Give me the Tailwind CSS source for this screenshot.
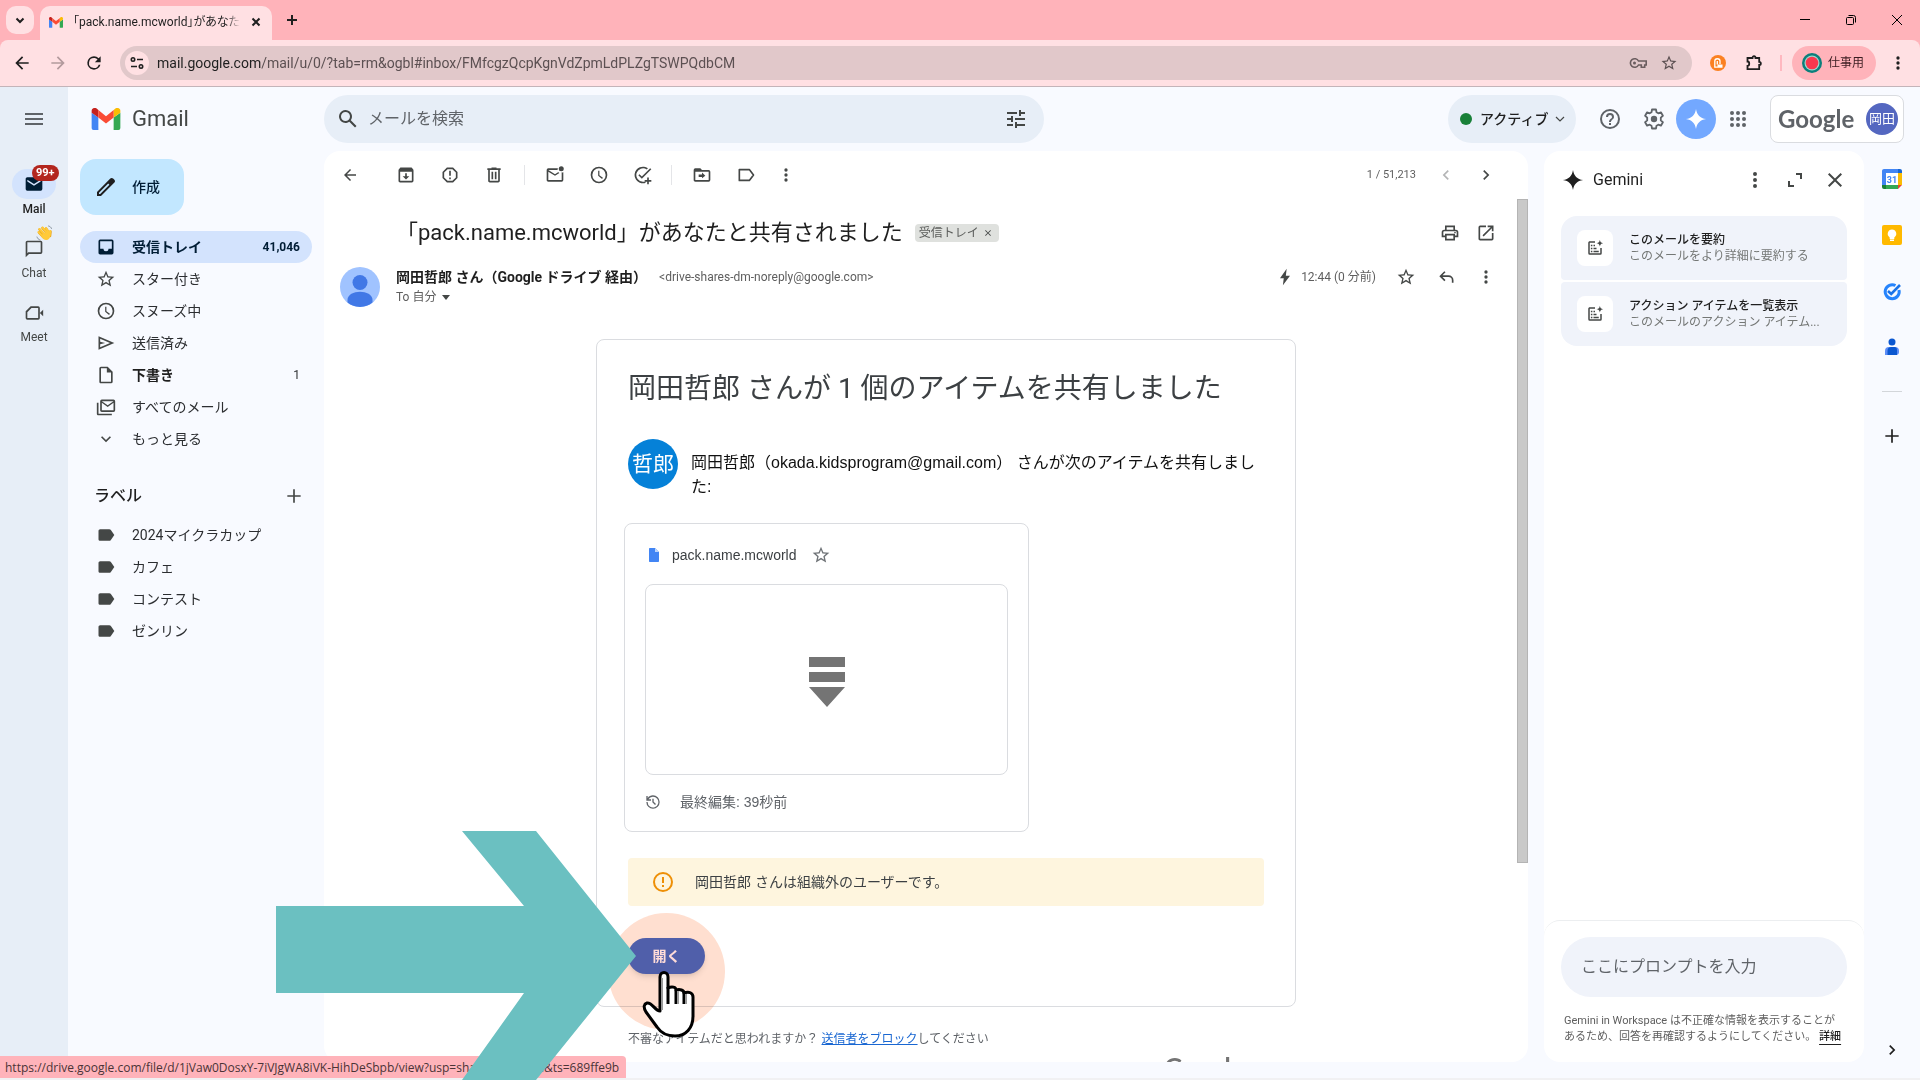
<!DOCTYPE html>
<html lang="ja">
<head>
  <meta charset="UTF-8">
  <meta name="viewport" content="width=device-width, initial-scale=1.0">
  <title>「pack.name.mcworld」があなたと共有されました</title>
  <script src="https://cdn.jsdelivr.net/npm/@tailwindcss/browser@4"></script>
</head>
<body class="relative h-screen overflow-hidden flex flex-col bg-[#f8faff] text-[#1f1f1f] font-['Roboto','Noto_Sans_CJK_JP',sans-serif]">

  <!-- shared icons -->
  <svg class="hidden">
    <symbol id="gmail" viewBox="0 0 30 23">
      <path fill="#4285f4" d="M0 5v16a2 2 0 0 0 2 2h5V10z"/>
      <path fill="#34a853" d="M23 10v13h5a2 2 0 0 0 2-2V5z"/>
      <path fill="#fbbc04" d="M23 2.200V10l7-5V3c0-2.800-3.200-4-5.200-2.500z"/>
      <path fill="#c5221f" d="M0 3v2l7 5V2.200L5.200.5C3.200-1 0 .2 0 3z"/>
      <path fill="#fa4b35" d="M7 2.200l8 6.300 8-6.300V10l-8 6.200L7 10z"/>
    </symbol>
    <symbol id="back" viewBox="0 0 24 24"><path d="M20 11H7.830l5.590-5.590L12 4l-8 8 8 8 1.410-1.410L7.830 13H20v-2z"/></symbol>
    <symbol id="more" viewBox="0 0 24 24"><path d="M12 8a2 2 0 1 0 0-4 2 2 0 0 0 0 4zm0 2a2 2 0 1 0 0 4 2 2 0 0 0 0-4zm0 6a2 2 0 1 0 0 4 2 2 0 0 0 0-4z"/></symbol>
    <symbol id="star" viewBox="0 0 24 24"><path d="M22 9.240l-7.190-.62L12 2 9.190 8.630 2 9.240l5.460 4.730L5.820 21 12 17.270 18.180 21l-1.630-7.030L22 9.240zM12 15.400l-3.760 2.270 1-4.280-3.320-2.880 4.380-.38L12 6.100l1.710 4.040 4.380.38-3.320 2.880 1 4.280L12 15.400z"/></symbol>
    <symbol id="clock" viewBox="0 0 24 24"><path d="M12 2a10 10 0 1 0 0 20 10 10 0 0 0 0-20zm0 18a8 8 0 1 1 0-16 8 8 0 0 1 0 16zm.5-13H11v6l4.700 3.700 1-1.300-4.200-3.100z"/></symbol>
    <symbol id="alert" viewBox="0 0 24 24"><path d="M11 15h2v2h-2zm0-8h2v6h-2zm1-5a10 10 0 1 0 0 20 10 10 0 0 0 0-20zm0 18a8 8 0 1 1 0-16 8 8 0 0 1 0 16z"/></symbol>
    <symbol id="label" viewBox="0 0 24 24"><path d="M17.600 5.800C17.200 5.300 16.700 5 16 5H5a2 2 0 0 0-2 2v10c0 1.100.9 2 2 2h11c.7 0 1.200-.3 1.600-.8L22 12z"/></symbol>
    <symbol id="down" viewBox="0 0 24 24"><path d="M7.400 8.600L12 13.200l4.600-4.600L18 10l-6 6-6-6z"/></symbol>
    <symbol id="right" viewBox="0 0 24 24"><path d="M8.600 16.600L13.200 12 8.600 7.400 10 6l6 6-6 6z"/></symbol>
    <symbol id="plus" viewBox="0 0 24 24"><path d="M20 13h-7v7h-2v-7H4v-2h7V4h2v7h7z"/></symbol>
    <symbol id="close" viewBox="0 0 24 24"><path d="M19 6.400L17.600 5 12 10.600 6.400 5 5 6.400 10.600 12 5 17.600 6.400 19 12 13.400 17.600 19 19 17.600 13.400 12z"/></symbol>
    <symbol id="spark" viewBox="0 0 24 24"><path d="M12 1c1 6.500 4.500 10 11 11-6.500 1-10 4.500-11 11C11 16.500 7.500 13 1 12 7.500 11 11 7.500 12 1z"/></symbol>
    <symbol id="note" viewBox="0 0 24 24"><path d="M12 3v2H5v14h14v-7h2v7a2 2 0 0 1-2 2H5a2 2 0 0 1-2-2V5c0-1.100.9-2 2-2zM6.500 7.500h2v2h-2zm0 4h2v2h-2zm0 4h2v2h-2zm3.500-4h4v2h-4zm0 4h7v2h-7zm0-8h2v2h-2zM18.500 1c.5 3 1.500 4 4.500 4.500-3 .5-4 1.500-4.500 4.500-.5-3-1.500-4-4.500-4.500 3-.5 4-1.500 4.500-4.500z"/></symbol>
  </svg>

  <!-- tab strip -->
  <div class="h-10 shrink-0 flex items-end bg-[#ffb3ba] text-[#1f1f1f]">
    <button class="ml-[6px] mb-[6px] size-7 rounded-[10px] bg-[#ffe0e3] flex items-center justify-center" aria-label="タブを検索"><svg class="size-4" viewBox="0 0 16 16" fill="none" stroke="#1f1f1f" stroke-width="2"><path d="M4.500 6.500L8 10l3.500-3.500"/></svg></button>
    <div class="ml-[6px] w-[232px] h-[34px] rounded-t-[10px] bg-[#ffe0e3] flex items-center pl-[9px] pr-2 pb-[2px]">
      <svg class="w-[14px] h-[11px] shrink-0"><use href="#gmail"/></svg>
      <div class="ml-[10px] w-[167px] h-5 overflow-hidden whitespace-nowrap text-[12px] leading-5 [font-feature-settings:'palt'] [mask-image:linear-gradient(to_right,black_92%,transparent)]">「pack.name.mcworld」があなたと共有されました</div>
      <button class="ml-2 size-4" aria-label="タブを閉じる"><svg class="size-4" viewBox="0 0 16 16" fill="none" stroke="#1f1f1f" stroke-width="2"><path d="M4.500 4.500l7 7M11.500 4.500l-7 7"/></svg></button>
    </div>
    <button class="ml-3 mb-3 size-4" aria-label="新しいタブ"><svg class="size-4" viewBox="0 0 16 16" fill="none" stroke="#1f1f1f" stroke-width="2"><path d="M8 3v10M3 8h10"/></svg></button>
    <div class="ml-auto h-10 flex items-center gap-[30px] pr-[15px]">
      <button class="size-4" aria-label="最小化"><svg class="size-4" viewBox="0 0 16 16" fill="none" stroke="#000"><path d="M3 7.500h10"/></svg></button>
      <button class="size-4" aria-label="元に戻す"><svg class="size-4" viewBox="0 0 16 16" fill="none" stroke="#000"><rect x="3.500" y="5.500" width="7" height="7" rx="1"/><path d="M5.500 3.500h5a2 2 0 0 1 2 2v5"/></svg></button>
      <button class="size-4" aria-label="閉じる"><svg class="size-4" viewBox="0 0 16 16" fill="none" stroke="#000"><path d="M3 3l10 10M13 3L3 13"/></svg></button>
    </div>
  </div>

  <!-- address bar -->
  <div class="h-[47px] shrink-0 bg-[#ffb3ba]">
    <div class="h-[47px] rounded-t-[8px] bg-[#ffe0e3] border-b border-[#c3b4b9] flex items-center">
      <button class="ml-3 size-5" aria-label="戻る"><svg class="size-5 fill-[#1f1f1f]"><use href="#back"/></svg></button>
      <button class="ml-4 size-5" aria-label="進む"><svg class="size-5 fill-[#b39a9d] rotate-180"><use href="#back"/></svg></button>
      <button class="ml-4 size-5" aria-label="再読み込み"><svg class="size-5 fill-[#1f1f1f]" viewBox="0 0 24 24"><path d="M17.650 6.350A7.960 7.960 0 0 0 12 4a8 8 0 1 0 7.730 10h-2.080A6 6 0 1 1 12 6c1.660 0 3.140.69 4.220 1.780L13 11h7V4z"/></svg></button>
      <div class="ml-4 h-[34px] flex-1 rounded-full bg-[#e1c8ca] flex items-center pl-[5px] pr-[14px]">
        <button class="size-6 rounded-full bg-[#ffe0e3] flex items-center justify-center" aria-label="サイト情報"><svg class="size-4" viewBox="0 0 16 16" fill="none" stroke="#1f1f1f" stroke-width="1.600"><circle cx="4" cy="4.500" r="1.700"/><path d="M8 4.500h6M2 11.500h6"/><circle cx="12" cy="11.500" r="1.700"/></svg></button>
        <div class="ml-2 text-[14px] leading-5 whitespace-nowrap text-[#5c5052]"><span class="text-[#1f1f1f]">mail.google.com</span>/mail/u/0/?tab=rm&amp;ogbl#inbox/FMfcgzQcpKgnVdZpmLdPLZgTSWPQdbCM</div>
        <svg class="ml-auto w-[18px] h-3" viewBox="0 0 18 12" fill="none" stroke="#6a5d5f" stroke-width="1.600"><path d="M9.500 4h7.700v4h-1.500v2.200h-3.400V8H9.500a4.300 4.300 0 1 1 0-4z"/><circle cx="5.500" cy="6" r="1.500" fill="#6a5d5f" stroke="none"/></svg>
        <svg class="ml-[13px] size-[18px] fill-[#5c5052]"><use href="#star"/></svg>
      </div>
      <svg class="ml-[18px] size-4" viewBox="0 0 16 16"><circle cx="8" cy="8" r="8" fill="#fb8122"/><path fill="none" stroke="#fff" stroke-width="1.300" d="M4.800 12.500V6C4.800 3 10 3 10 6v3M7.300 6v3.500"/><path fill="#fff" d="M4.500 11.500h3V9.500h5v3.200h-8z"/></svg>
      <svg class="ml-5 size-4" viewBox="0 0 16 16" fill="none" stroke="#1f1f1f" stroke-width="1.800"><path d="M1.500 3h5c0-2.500 3-2.500 3 0h3.700v3.800c2.200 0 2.200 3.200 0 3.200v4.200H1.500v-3.400c2.300 0 2.300-4.300 0-4.300z"/></svg>
      <span class="ml-[18px] mr-[10px] w-[2px] h-4 bg-[#ffb8c0]"></span>
      <button class="h-[34px] w-[84px] rounded-full bg-[#ffb3ba] flex items-center pl-[10px] gap-[6px] text-[12px] text-[#3a1c20]">
        <svg class="size-5" viewBox="0 0 20 20"><circle cx="10" cy="10" r="10" fill="#0b7f7b"/><circle cx="10" cy="10" r="7.500" fill="#9ed8cf"/><circle cx="10" cy="10" r="6.300" fill="#f8384f"/></svg>仕事用
      </button>
      <button class="ml-3 mr-3 size-5" aria-label="メニュー"><svg class="size-5 fill-[#1f1f1f]"><use href="#more"/></svg></button>
    </div>
  </div>

  <div class="flex-1 min-h-0 flex border-b-2 border-[#f1f1f3]">
    <!-- app rail -->
    <nav class="w-[68px] shrink-0 bg-[#e7eef7] flex flex-col items-center text-[12px] leading-4 text-[#444746]">
      <button class="mt-5 size-6" aria-label="メインメニュー"><svg class="size-6 fill-[#5f6368]" viewBox="0 0 24 24"><path d="M3 6h18v2H3zm0 5h18v2H3zm0 5h18v2H3z"/></svg></button>
      <a href="#" class="mt-[38px] flex flex-col items-center text-[#1f1f1f] font-medium">
        <span class="relative w-11 h-[30px] rounded-full bg-[#d3e3fd] flex items-center justify-center">
          <svg class="size-5 fill-[#001d35]" viewBox="0 0 24 24"><path d="M4 4h16a2 2 0 0 1 2 2v12a2 2 0 0 1-2 2H4a2 2 0 0 1-2-2V6c0-1.100.9-2 2-2zm0 3v2l8 5 8-5V7l-8 5z"/></svg>
          <span class="absolute -top-1 left-5 h-4 px-1 rounded-full bg-[#b3261e] text-white text-[11px] leading-4 font-bold">99+</span>
        </span>
        <span class="mt-[2px]">Mail</span>
      </a>
      <a href="#" class="mt-4 flex flex-col items-center">
        <span class="relative w-11 h-8 flex items-center justify-center">
          <svg class="size-5 fill-[#444746]" viewBox="0 0 24 24"><path d="M4 2h16a2 2 0 0 1 2 2v12a2 2 0 0 1-2 2H6l-4 4V4c0-1.100.9-2 2-2zm0 2v13l1-1h15V4z"/></svg>
          <svg class="absolute -top-2 left-[24px] size-4" viewBox="0 0 32 32" fill="none" stroke-linecap="round">
            <path stroke="#e5a11a" stroke-width="5" d="M6 15l10 10M7 9l10 11M13 6l9 11M20 7l6 9M29 13l-1 9"/>
            <path stroke="#ffca3a" stroke-width="4" d="M5 14l10 10M7 8l10 11M13 5l9 11M20 6l6 9M28.500 12l-1.500 9"/>
            <path fill="#ffca3a" d="M11 20l13-8 5 6c0 8-4 12-9 12-4 0-7-3-9-6z"/>
            <path stroke="#6d7b86" stroke-width="1.500" d="M2 24c1 3 3 5 6 6M25 2c3 1 5 2 6 5"/>
          </svg>
        </span>
        <span>Chat</span>
      </a>
      <a href="#" class="mt-4 flex flex-col items-center">
        <span class="w-11 h-8 flex items-center justify-center"><svg class="size-5 fill-[#444746]" viewBox="0 0 24 24"><path d="M8 4h9a2 2 0 0 1 2 2v12a2 2 0 0 1-2 2H4a2 2 0 0 1-2-2V10zm1 2L4 11v7h13V6zm10 6l4-4v8z"/></svg></span>
        <span>Meet</span>
      </a>
    </nav>

    <div class="flex-1 min-w-0 flex flex-col">
      <!-- gmail header -->
      <header class="h-16 shrink-0 flex items-center pr-4">
        <a href="#" class="w-64 shrink-0 flex items-center pl-[23px] gap-[11px] text-[22px] leading-8 text-[#444746]"><svg class="w-[30px] h-[22px]"><use href="#gmail"/></svg>Gmail</a>
        <div class="w-[720px] h-12 rounded-full bg-[#e7eef7] flex items-center pl-3 pr-4">
          <svg class="size-6 fill-[#444746]" viewBox="0 0 24 24"><path d="M20.500 19l-5.700-5.700a6.500 6.500 0 1 0-1.500 1.500L19 20.500zM5 9.500a4.500 4.500 0 1 1 9 0 4.500 4.500 0 0 1-9 0z"/></svg>
          <input type="text" aria-label="メールを検索" placeholder="メールを検索" class="ml-2 flex-1 bg-transparent outline-none text-[16px] leading-6 placeholder:text-[#5f6368]">
          <button class="size-6" aria-label="検索オプション"><svg class="size-6 fill-[#444746]" viewBox="0 0 24 24"><path d="M3 17v2h6v-2zM3 5v2h10V5zm10 16v-2h8v-2h-8v-2h-2v6zM7 9v2H3v2h4v2h2V9zm14 4v-2H11v2zm-6-4h2V7h4V5h-4V3h-2z"/></svg></button>
        </div>
        <div class="ml-auto flex items-center">
          <button class="h-12 w-32 rounded-full bg-[#e7eef7] flex items-center pl-3 text-[14px] font-medium"><span class="size-3 rounded-full bg-[#188038]"></span><span class="ml-2">アクティブ</span><svg class="ml-1 size-4" viewBox="0 0 16 16" fill="none" stroke="#444746" stroke-width="1.200"><path d="M4 6l4 4 4-4"/></svg></button>
          <button class="ml-[22px] size-6" aria-label="サポート"><svg class="size-6 fill-[#5f6368]" viewBox="0 0 24 24"><path d="M11 16h2v2h-2zm1-14a10 10 0 1 0 0 20 10 10 0 0 0 0-20zm0 18a8 8 0 1 1 0-16 8 8 0 0 1 0 16zm0-14a4 4 0 0 0-4 4h2a2 2 0 1 1 4 0c0 2-3 1.800-3 5h2c0-2.200 3-2.500 3-5a4 4 0 0 0-4-4z"/></svg></button>
          <button class="ml-5 size-6" aria-label="設定"><svg class="size-6" viewBox="0 0 24 24" fill="none" stroke="#5f6368" stroke-width="1.800" stroke-linejoin="round"><path d="M10 2.500h4l.5 2.800 1.800 1 2.600-1 2 3.500-2.100 1.800v2.800l2.100 1.800-2 3.500-2.600-1-1.800 1-.5 2.800h-4l-.5-2.800-1.800-1-2.600 1-2-3.500 2.100-1.800v-2.800L3.100 8.800l2-3.500 2.600 1 1.800-1z"/><circle cx="12" cy="12" r="3.200" fill="#5f6368" stroke="none"/></svg></button>
          <button class="ml-[10px] size-10 rounded-full bg-[#73a8ff] flex items-center justify-center" aria-label="Gemini に相談"><svg class="size-[22px] fill-white"><use href="#spark"/></svg></button>
          <button class="ml-[10px] size-6" aria-label="Google アプリ"><svg class="size-6 fill-[#5f6368]" viewBox="0 0 24 24"><circle cx="6" cy="6" r="2"/><circle cx="12" cy="6" r="2"/><circle cx="18" cy="6" r="2"/><circle cx="6" cy="12" r="2"/><circle cx="12" cy="12" r="2"/><circle cx="18" cy="12" r="2"/><circle cx="6" cy="18" r="2"/><circle cx="12" cy="18" r="2"/><circle cx="18" cy="18" r="2"/></svg></button>
          <a href="#" class="ml-5 h-12 w-[134px] rounded-lg border border-[#dadce0] bg-white flex items-center justify-between pl-[7px] pr-[5px]">
            <span class="text-[24px] leading-8 font-bold text-[#5f6368] font-['Lato',sans-serif]">Google</span>
            <span class="size-8 rounded-full bg-[#5467c0] text-white text-[13px] leading-8 text-center">岡田</span>
          </a>
        </div>
      </header>

      <div class="flex-1 min-h-0 flex pb-4">
        <!-- folders -->
        <aside class="w-64 shrink-0 pl-3 pr-3 pt-2 text-[14px]">
          <button class="h-14 w-[104px] rounded-2xl bg-[#c2e7ff] flex items-center pl-[14px] gap-[14px] font-medium text-[#001d35]"><svg class="size-6 fill-[#1f1f1f]" viewBox="0 0 24 24"><path d="M20.400 4.800l-1.300-1.200c-.8-.8-2-.8-2.800 0L3 17v4h4L20.400 7.600c.8-.8.8-2 0-2.800zM6.200 19H5v-1.200l9.200-9.200 1.200 1.200z"/></svg>作成</button>
          <nav class="mt-4 text-[#2c2e31]">
            <a href="#" class="h-8 rounded-full bg-[#d3e3fd] flex items-center pl-4 pr-3 font-bold text-[#001d35]"><svg class="size-5 fill-[#001d35]" viewBox="0 0 24 24"><path d="M19 3H5a2 2 0 0 0-2 2v14c0 1.100.9 2 2 2h14a2 2 0 0 0 2-2V5a2 2 0 0 0-2-2zm0 11h-4a3 3 0 0 1-6 0H5V5h14z"/></svg><span class="ml-4">受信トレイ</span><span class="ml-auto text-[12px]">41,046</span></a>
            <a href="#" class="h-8 flex items-center pl-4"><svg class="size-5 fill-[#444746]"><use href="#star"/></svg><span class="ml-4">スター付き</span></a>
            <a href="#" class="h-8 flex items-center pl-4"><svg class="size-5 fill-[#444746]"><use href="#clock"/></svg><span class="ml-4">スヌーズ中</span></a>
            <a href="#" class="h-8 flex items-center pl-4"><svg class="size-5 fill-[#444746]" viewBox="0 0 24 24"><path d="M3 4v16l19-8zm2 3l11.900 5L5 17v-3.500l6-1.500-6-1.500z"/></svg><span class="ml-4">送信済み</span></a>
            <a href="#" class="h-8 flex items-center pl-4 pr-3"><svg class="size-5 fill-[#444746]" viewBox="0 0 24 24"><path d="M14 2H6a2 2 0 0 0-2 2v16c0 1.100.9 2 2 2h12a2 2 0 0 0 2-2V8zM6 20V4h7v5h5v11z"/></svg><span class="ml-4 font-bold text-[#1f1f1f]">下書き</span><span class="ml-auto text-[12px]">1</span></a>
            <a href="#" class="h-8 flex items-center pl-4"><svg class="size-5 fill-[#444746]" viewBox="0 0 24 24"><path d="M21 3H7a2 2 0 0 0-2 2v11c0 1.100.9 2 2 2h14a2 2 0 0 0 2-2V5a2 2 0 0 0-2-2zm0 13H7V7l7 5 7-5zM14 10L7 5h14zM3 7H1v13c0 1.100.9 2 2 2h16v-2H3z"/></svg><span class="ml-4">すべてのメール</span></a>
            <a href="#" class="h-8 flex items-center pl-4"><svg class="size-5 fill-[#444746]"><use href="#down"/></svg><span class="ml-4">もっと見る</span></a>
          </nav>
          <div class="mt-[25px] h-8 flex items-center pl-[14px] pr-2">
            <h2 class="text-[16px] font-medium">ラベル</h2>
            <button class="ml-auto size-5" aria-label="新しいラベルを作成"><svg class="size-5 fill-[#444746]"><use href="#plus"/></svg></button>
          </div>
          <nav class="mt-[7px] text-[#2c2e31]">
            <a href="#" class="h-8 flex items-center pl-4"><svg class="size-5 fill-[#444746]"><use href="#label"/></svg><span class="ml-4">2024マイクラカップ</span></a>
            <a href="#" class="h-8 flex items-center pl-4"><svg class="size-5 fill-[#444746]"><use href="#label"/></svg><span class="ml-4">カフェ</span></a>
            <a href="#" class="h-8 flex items-center pl-4"><svg class="size-5 fill-[#444746]"><use href="#label"/></svg><span class="ml-4">コンテスト</span></a>
            <a href="#" class="h-8 flex items-center pl-4"><svg class="size-5 fill-[#444746]"><use href="#label"/></svg><span class="ml-4">ゼンリン</span></a>
          </nav>
        </aside>

        <!-- message -->
        <main class="flex-1 min-w-0 rounded-2xl bg-white overflow-hidden flex flex-col">
          <div class="h-12 shrink-0 flex items-center pl-4 pr-8 text-[11px] text-[#5e5e5e]">
            <button class="size-5" aria-label="受信トレイに戻る"><svg class="size-[18px] mx-auto fill-[#444746]"><use href="#back"/></svg></button>
            <button class="ml-9 size-5" aria-label="アーカイブ"><svg class="size-5 fill-[#444746]" viewBox="0 0 24 24"><path d="M20.500 5.200L19.200 3.500C19 3.200 18.500 3 18 3H6c-.5 0-.9.2-1.200.6L3.500 5.200C3.200 5.600 3 6 3 6.500V19c0 1.100.9 2 2 2h14a2 2 0 0 0 2-2V6.500c0-.5-.2-1-.5-1.300zM5 19V8h14v11zm8-9h-2v3.500H8l4 4 4-4h-3z"/></svg></button>
            <button class="ml-6 size-5" aria-label="迷惑メールを報告"><svg class="size-5 fill-[#444746]" viewBox="0 0 24 24"><path d="M11 15h2v2h-2zm0-8h2v6h-2zM8.300 3h7.400L21 8.300v7.400L15.700 21H8.300L3 15.700V8.300zm.8 2L5 9.100v5.800L9.100 19h5.800l4.100-4.100V9.100L14.900 5z"/></svg></button>
            <button class="ml-6 size-5" aria-label="削除"><svg class="size-5 fill-[#444746]" viewBox="0 0 24 24"><path d="M15 4V3H9v1H4v2h1v13c0 1.100.9 2 2 2h10a2 2 0 0 0 2-2V6h1V4zm2 15H7V6h10zM9 8h2v9H9zm4 0h2v9h-2z"/></svg></button>
            <span class="ml-5 w-px h-5 bg-[#e4e5e8]"></span>
            <button class="ml-5 size-5" aria-label="未読にする"><svg class="size-5 fill-[#444746]" viewBox="0 0 24 24"><path d="M15.500 4H4a2 2 0 0 0-2 2v12c0 1.100.9 2 2 2h16a2 2 0 0 0 2-2V8.800a4 4 0 0 1-2 0V18H4V8l8 5 5.300-3.300a4 4 0 0 1-1.200-1.400L12 11 4 6h11z"/><circle cx="19.500" cy="4.500" r="3"/></svg></button>
            <button class="ml-6 size-5" aria-label="スヌーズ"><svg class="size-5 fill-[#444746]"><use href="#clock"/></svg></button>
            <button class="ml-6 size-5" aria-label="ToDo リストに追加"><svg class="size-5 fill-[#444746]" viewBox="0 0 24 24"><path d="M22 5.200L10.600 16.600 6.400 12.400l1.400-1.400 2.800 2.800L20.600 3.800zM12 20a8 8 0 1 1 4.500-14.600l1.400-1.400A10 10 0 1 0 15 21.500v-2.100c-.9.4-2 .6-3 .6zm7-5h-2v3h-3v2h3v3h2v-3h3v-2h-3z"/></svg></button>
            <span class="ml-[18px] w-px h-5 bg-[#e4e5e8]"></span>
            <button class="ml-5 size-5" aria-label="移動"><svg class="size-5 fill-[#444746]" viewBox="0 0 24 24"><path d="M20 6h-8l-2-2H4a2 2 0 0 0-2 2v12c0 1.100.9 2 2 2h16a2 2 0 0 0 2-2V8a2 2 0 0 0-2-2zm0 12H4V8h16zm-8-2l4-3-4-4v2.500H8v3h4z"/></svg></button>
            <button class="ml-6 size-5" aria-label="ラベル"><svg class="size-5" viewBox="0 0 24 24" fill="none" stroke="#444746" stroke-width="2"><path d="M16 5.500H4v13h12l5-6.500z" stroke-linejoin="round"/></svg></button>
            <button class="ml-5 size-5" aria-label="その他"><svg class="size-5 fill-[#444746]"><use href="#more"/></svg></button>
            <span class="ml-auto">1 / 51,213</span>
            <button class="ml-5 size-5" aria-label="前へ"><svg class="size-5 fill-[#b4b5b6] rotate-180"><use href="#right"/></svg></button>
            <button class="ml-5 size-5" aria-label="次へ"><svg class="size-5 fill-[#444746]"><use href="#right"/></svg></button>
          </div>

          <div class="flex-1 min-h-0 flex">
            <div class="flex-1 min-w-0 pr-px overflow-hidden">
              <div class="h-[67px] flex items-center pl-[72px] pr-5">
                <h1 class="text-[22px] leading-7">「pack.name.mcworld」があなたと共有されました</h1>
                <span class="ml-3 h-[18px] px-1 rounded bg-[#dfe1de] flex items-center gap-1 text-[12px] leading-[18px] text-[#5a5c5a]">受信トレイ<button class="size-3" aria-label="ラベルを削除"><svg class="size-[10px] fill-[#444746]"><use href="#close"/></svg></button></span>
                <button class="ml-auto size-5" aria-label="印刷"><svg class="size-5 fill-[#444746]" viewBox="0 0 24 24"><path d="M19 8h-1V3H6v5H5a3 3 0 0 0-3 3v6h4v4h12v-4h4v-6a3 3 0 0 0-3-3zM8 5h8v3H8zm8 14H8v-4h8zm4-4h-2v-2H6v2H4v-4c0-.6.4-1 1-1h14c.6 0 1 .4 1 1z"/><circle cx="18" cy="11.500" r="1"/></svg></button>
                <button class="ml-4 size-5" aria-label="新しいウィンドウで開く"><svg class="size-5 fill-[#444746]" viewBox="0 0 24 24"><path d="M19 19H5V5h7V3H5a2 2 0 0 0-2 2v14c0 1.100.9 2 2 2h14a2 2 0 0 0 2-2v-7h-2zM14 3v2h3.600L7.800 14.800l1.400 1.400L19 6.400V10h2V3z"/></svg></button>
              </div>
              <div class="pt-px pl-4 pr-5 flex">
                <svg class="size-10" viewBox="0 0 40 40"><circle cx="20" cy="20" r="20" fill="#a0c3ff"/><circle cx="20" cy="15.500" r="7.500" fill="#4178e6"/><path fill="#4178e6" d="M7.500 33c0-11 25-11 25 0v2.600a20 20 0 0 1-25 0z"/></svg>
                <div class="ml-4 flex-1 min-w-0 text-[12px] leading-5 text-[#5e5e5e]">
                  <div class="flex items-center">
                    <span class="text-[14px] font-bold text-[#1f1f1f]">岡田哲郎 さん（Google ドライブ 経由）</span>
                    <span class="ml-3">&lt;drive-shares-dm-noreply@google.com&gt;</span>
                    <svg class="ml-auto size-5 fill-[#444746]" viewBox="0 0 24 24"><path d="M14 2L6 13.500h4.500L9.500 22 18 10.500h-5z"/></svg>
                    <span class="ml-[6px] text-[12px]">12:44 (0 分前)</span>
                    <button class="ml-5 size-5" aria-label="スター"><svg class="size-5 fill-[#444746]"><use href="#star"/></svg></button>
                    <button class="ml-5 size-5" aria-label="返信"><svg class="size-5 fill-[#444746]" viewBox="0 0 24 24"><path d="M10 5L4 11l6 6 1.400-1.400L7.800 12H15a4 4 0 0 1 4 4v3h2v-3a6 6 0 0 0-6-6H7.800l3.600-3.600z"/></svg></button>
                    <button class="ml-5 size-5" aria-label="その他"><svg class="size-5 fill-[#444746]"><use href="#more"/></svg></button>
                  </div>
                  <button class="flex items-center">To 自分<svg class="ml-[6px] w-2 h-[5px] fill-[#444746]" viewBox="0 0 8 5"><path d="M0 0h8L4 5z"/></svg></button>
                </div>
              </div>

              <div class="mt-8 pl-[72px] pr-5">
                <div class="w-full max-w-[700px] mx-auto font-['Liberation_Sans','Noto_Sans_CJK_JP',sans-serif]">
                  <section class="border border-[#dadce0] rounded-lg pt-[29px] pb-8 px-[31px]">
                    <h2 class="text-[28px] leading-10 text-[#3c4043] font-['Roboto','Noto_Sans_CJK_JP',sans-serif]">岡田哲郎 さんが 1 個のアイテムを共有しました</h2>
                    <div class="mt-[30px] flex">
                      <span class="shrink-0 size-[50px] rounded-full bg-[#0581d8] text-white text-[21px] leading-[50px] text-center">哲郎</span>
                      <p class="ml-[13px] pt-3 text-[16px] leading-6 text-[#111]">岡田哲郎（okada.kidsprogram@gmail.com） さんが次のアイテムを共有しました:</p>
                    </div>
                    <div class="mt-6 -ml-1 w-[405px] rounded-lg border border-[#dadce0] pt-5 pb-[18px] px-5">
                      <div class="h-[22px] flex items-center text-[14px] text-[#3c4043]">
                        <svg class="ml-1 w-[10px] h-[14px]" viewBox="0 0 10 14"><path fill="#4285f4" d="M1 0h5l4 4v9c0 .6-.4 1-1 1H1c-.6 0-1-.4-1-1V1c0-.6.4-1 1-1z"/><path fill="#bcd4fb" d="M6 0v4h4z"/></svg>
                        <a href="#" class="ml-[13px]">pack.name.mcworld</a>
                        <svg class="ml-[14px] size-5 fill-[#6f7377]"><use href="#star"/></svg>
                      </div>
                      <div class="mt-[18px] h-[191px] rounded-lg border border-[#dadce0] flex items-center justify-center">
                        <svg class="w-9 h-[50px] fill-[#747474] mt-1" viewBox="0 0 36 50"><path d="M0 0h36v10H0zM0 15h36v10H0zM0 30h36L18 50z"/></svg>
                      </div>
                      <div class="mt-4 h-[22px] flex items-center text-[14px] text-[#5f6368]">
                        <svg class="size-4 fill-[#5f6368]" viewBox="0 0 24 24"><path d="M12 2C8.700 2 5.800 3.600 4 6V3H2v7h7V8H5.200A8 8 0 1 1 4 12H2A10 10 0 1 0 12 2zm-1 5v5.500l4 4 1.500-1.400-3.500-3.500V7z"/></svg>
                        <span class="ml-[19px]">最終編集: 39秒前</span>
                      </div>
                    </div>
                    <div class="mt-[26px] h-12 rounded bg-[#fef5de] flex items-center pl-[23px] text-[14px] text-[#3c4043]">
                      <svg class="size-6 fill-[#ee8f06]"><use href="#alert"/></svg>
                      <span class="ml-5">岡田哲郎 さんは組織外のユーザーです。</span>
                    </div>
                    <div class="relative mt-8 w-[76px] h-9">
                      <span class="absolute -top-[25px] -left-5 size-[117px] rounded-full bg-[#ffdfd0] mix-blend-multiply"></span>
                      <button class="relative w-[77px] h-9 rounded-full bg-[#505faa] text-[#ffdcd8] text-[14px] font-bold shadow-md">開く</button>
                    </div>
                  </section>
                  <div class="mt-[21px] pl-8 pr-[52px] flex">
                    <p class="text-[12px] leading-[22px] text-[#5f6368]">不審なアイテムだと思われますか？ <a href="#" class="text-[#1967d2] underline">送信者をブロック</a>してください</p>
                    <span class="ml-auto mt-[22px] text-[25px] leading-8 font-bold text-[#747474] font-['Lato',sans-serif]">Google</span>
                  </div>
                </div>
              </div>
            </div>
            <div class="w-[11px] shrink-0"><div class="h-[664px] bg-[#c9c9c9] border border-[#b4b4b4]"></div></div>
          </div>
        </main>

        <!-- gemini -->
        <aside class="ml-4 w-80 shrink-0 rounded-2xl bg-white flex flex-col overflow-hidden">
          <div class="h-[58px] flex items-center pl-[18px] pr-[17px]">
            <svg class="size-[22px] fill-[#1f1f1f]"><use href="#spark"/></svg>
            <h2 class="ml-[9px] text-[16px] leading-6">Gemini</h2>
            <button class="ml-auto size-6" aria-label="その他"><svg class="size-6 fill-[#444746]"><use href="#more"/></svg></button>
            <button class="ml-4 size-6" aria-label="拡大"><svg class="size-6 fill-[#444746]" viewBox="0 0 24 24"><path d="M13 5h6v6h-2V7h-4zM5 13h2v4h4v2H5z"/></svg></button>
            <button class="ml-4 size-6" aria-label="閉じる"><svg class="size-6 fill-[#444746]"><use href="#close"/></svg></button>
          </div>
          <div class="mt-[7px] px-[17px] flex flex-col gap-[2px] text-[12px] leading-4">
            <button class="h-16 rounded-t-2xl rounded-b bg-[#f0f3fa] flex items-center px-4 text-left">
              <span class="size-9 rounded-lg bg-white flex items-center justify-center shrink-0"><svg class="size-[18px] fill-[#444746]"><use href="#note"/></svg></span>
              <span class="ml-4 min-w-0 pr-1"><span class="block font-medium">このメールを要約</span><span class="block truncate text-[#747775]">このメールをより詳細に要約する</span></span>
            </button>
            <button class="h-16 rounded-b-2xl rounded-t bg-[#f0f3fa] flex items-center px-4 text-left">
              <span class="size-9 rounded-lg bg-white flex items-center justify-center shrink-0"><svg class="size-[18px] fill-[#444746]"><use href="#note"/></svg></span>
              <span class="ml-4 min-w-0 pr-1"><span class="block font-medium">アクション アイテムを一覧表示</span><span class="block truncate text-[#747775]">このメールのアクション アイテム...</span></span>
            </button>
          </div>
          <div class="mt-auto rounded-t-2xl border-t border-[#eceef0] pt-4 px-[17px] pb-[17px]">
            <input type="text" aria-label="プロンプト" placeholder="ここにプロンプトを入力" class="w-full h-[60px] rounded-full bg-[#f0f3fa] px-5 pb-[2px] outline-none text-[16px] placeholder:text-[#5f6368]">
            <p class="mt-4 pl-[3px] text-[11px] leading-4 text-[#5e5e5e]">Gemini in Workspace は不正確な情報を表示することが<br>あるため、回答を再確認するようにしてください。 <a href="#" class="underline underline-offset-4 font-medium text-[#1f1f1f]">詳細</a></p>
          </div>
        </aside>

        <!-- side apps -->
        <nav class="w-14 shrink-0 flex flex-col items-center pt-[18px]">
          <a href="#" aria-label="カレンダー"><svg class="size-5" viewBox="0 0 20 20"><path fill="#fff" d="M4 4h12v12H4z"/><path fill="#4285f4" d="M2 0h14v4H4v12H0V2C0 .9.900 0 2 0z"/><path fill="#1967d2" d="M16 0h2c1.100 0 2 .9 2 2v2h-4z"/><path fill="#fbbc04" d="M16 4h4v12h-4z"/><path fill="#34a853" d="M4 16h12v4H4z"/><path fill="#188038" d="M0 16h4v4H2a2 2 0 0 1-2-2z"/><path fill="#ea4335" d="M16 16h4l-4 4z"/><text x="10" y="13.500" font-size="9" font-weight="700" text-anchor="middle" fill="#4285f4" font-family="Roboto">31</text></svg></a>
          <a href="#" class="mt-9" aria-label="Keep"><svg class="size-5" viewBox="0 0 20 20"><rect width="20" height="20" rx="2" fill="#ffb900"/><path fill="#fff" d="M10 4.500a4.300 4.300 0 0 0-2.300 7.900V14h4.600v-1.600A4.300 4.300 0 0 0 10 4.500zM8 14.500h4V16H8z"/></svg></a>
          <a href="#" class="mt-9" aria-label="ToDo リスト"><svg class="size-5" viewBox="0 0 20 20" fill="none" stroke="#2684fc" stroke-width="3"><path d="M13.500 4.500A7 7 0 1 0 17 9"/><path d="M6 10l3.200 3L18 4" stroke="#1a73e8" stroke-width="2.600"/></svg></a>
          <a href="#" class="mt-9" aria-label="連絡先"><svg class="size-5" viewBox="0 0 20 20"><circle cx="10" cy="5" r="3.500" fill="#0b57d0"/><path fill="#5c8df6" d="M3 18v-4a4 4 0 0 1 4-4h6a4 4 0 0 1 4 4v1a3 3 0 0 1-3 3z"/><path fill="#0b57d0" d="M5.500 18v-4A4 4 0 0 1 9.500 10H13a3 3 0 0 1 2 3v5z"/></svg></a>
          <span class="mt-[34px] w-5 h-px bg-[#d3d6da]"></span>
          <button class="mt-[34px] size-5" aria-label="アドオンを取得"><svg class="size-5 fill-[#1f1f1f]"><use href="#plus"/></svg></button>
          <button class="mt-auto mb-[2px] size-5" aria-label="サイドパネルを非表示"><svg class="size-5 fill-[#1f1f1f]"><use href="#right"/></svg></button>
        </nav>
      </div>
    </div>
  </div>

  <!-- link target shown by the browser -->
  <div class="absolute left-0 bottom-[2px] h-[22px] pl-[5px] pr-[7px] rounded-tr bg-[#ffb3ba] text-[#4a3437] text-[12px] leading-[23px] whitespace-nowrap font-['Open_Sans',sans-serif]">https://drive.google.com/file/d/1jVaw0DosxY-7iVJgWA8iVK-HihDeSbpb/view?usp=sharing_eil&amp;invi&amp;ts=689ffe9b</div>

  <!-- callout arrow and pointer -->
  <svg class="absolute left-[276px] bottom-0 w-[360px] h-[249px] fill-[#6bc0c1] pointer-events-none" viewBox="0 0 360 249"><path d="M0 75h248L186 0h74l100 125-100 124h-74l62-87H0z"/></svg>
  <svg class="absolute left-[642px] bottom-[41px] w-[54px] h-[68px] pointer-events-none" viewBox="0 0 54 68">
    <path fill="#fff" stroke="#000" stroke-width="3" stroke-linejoin="round" d="M18 40V6c0-6 8-6 8 0v11c4-2 8-1 8 2 4-1 8 0 8 3 5-2 9 0 9 4v19c0 12-7 20-18 20-9 0-14-3-18-9L4 41c-3-5-2-8 1-9 5-1 8 8 13 8z"/>
    <path fill="none" stroke="#000" stroke-width="3" d="M26 16v17M34 19v14M42 21v12"/>
    <path fill="none" stroke="#999" stroke-width="2" d="M20 7v32M36 20v13M44 23v10"/>
  </svg>
</body>
</html>
